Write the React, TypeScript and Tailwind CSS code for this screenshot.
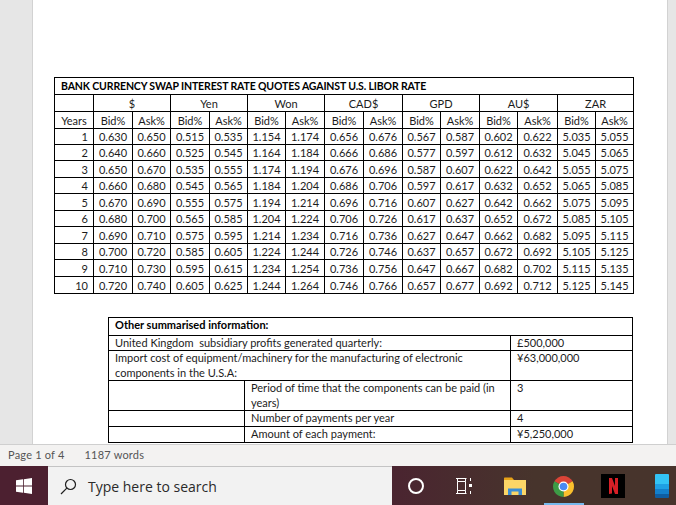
const currencies = ["$", "Yen", "Won", "CAD$", "GPD", "AU$", "ZAR"];

// each currency: [bid at year 1, spread is always 0.020, step is 0.010 a year]
const starts = [0.63, 0.515, 1.154, 0.656, 0.567, 0.602, 5.035];
const years = [1, 2, 3, 4, 5, 6, 7, 8, 9, 10];
const tallRows = [3, 5, 7, 9, 10];

const colWidths = [
  "w-[39px]",
  "w-[39px]",
  "w-[38px]",
  "w-[39px]",
  "w-[38px]",
  "w-[38px]",
  "w-[39px]",
  "w-[39px]",
  "w-[39px]",
  "w-[38px]",
  "w-[39px]",
  "w-[38px]",
  "w-[40px]",
  "w-[38px]",
  "w-[38px]",
];

const QuotesTable = () => {
  return (
    <table className="w-[579px] table-fixed border-collapse text-[11px] text-[#1c1c1c]">
      <colgroup>
        {colWidths.map((w, i) => (
          <col key={i} className={w} />
        ))}
      </colgroup>
      <tbody>
        <tr>
          <td colSpan={15} className="border border-black h-[17px] pl-[6px] text-[10.5px] font-bold text-black leading-[15px] tracking-[-0.13px]">
            BANK CURRENCY SWAP INTEREST RATE QUOTES AGAINST U.S. LIBOR RATE
          </td>
        </tr>
        <tr>
          <td className="border border-black h-[17px]"></td>
          {currencies.map((c) => (
            <td key={c} colSpan={2} className="border border-black h-[17px] text-center leading-[15px]">
              {c}
            </td>
          ))}
        </tr>
        <tr>
          <td className="border border-black h-[17px] text-center leading-[15px]">Years</td>
          {currencies.map((c) => [
            <td key={c + "b"} className="border border-black h-[17px] text-center leading-[15px]">Bid%</td>,
            <td key={c + "a"} className="border border-black h-[17px] text-center leading-[15px]">Ask%</td>,
          ])}
        </tr>
        {years.map((y) => {
          const cell = "border border-black p-0 leading-[15px] " + (tallRows.includes(y) ? "h-[17px]" : "h-[16px]");
          return (
            <tr key={y}>
              <td className={cell + " text-right pr-[5px]"}>{y}</td>
              {starts.map((s, i) => {
                const bid = s + (y - 1) * 0.01;
                return [
                  <td key={i + "b"} className={cell + " text-center"}>{bid.toFixed(3)}</td>,
                  <td key={i + "a"} className={cell + " text-center"}>{(bid + 0.02).toFixed(3)}</td>,
                ];
              })}
            </tr>
          );
        })}
      </tbody>
    </table>
  );
};

const info = "border border-black align-top pl-[6px] py-0 leading-[14px]";
const infoShort = "border border-black align-top pl-[6px] py-0 leading-[13px]";
const infoTall = "border border-black align-top pl-[6px] py-0 leading-[14.5px]";

const InfoTable = () => {
  return (
    <table className="mt-[23px] ml-[54px] w-[524px] table-fixed border-collapse text-[11px] text-[#1c1c1c]">
      <colgroup>
        <col className="w-[136px]" />
        <col className="w-[266px]" />
        <col className="w-[122px]" />
      </colgroup>
      <tbody>
        <tr>
          <td colSpan={3} className={info + " h-[18px] font-bold text-black"}>Other summarised information:</td>
        </tr>
        <tr>
          <td colSpan={2} className={infoShort + " h-[15px]"}>United Kingdom&nbsp; subsidiary profits generated quarterly:</td>
          <td className={infoShort}>£500,000</td>
        </tr>
        <tr>
          <td colSpan={2} className={infoTall + " h-[29px]"}>
            Import cost of equipment/machinery for the manufacturing of electronic
            <br />
            components in the U.S.A:
          </td>
          <td className={infoTall}>¥63,000,000</td>
        </tr>
        <tr>
          <td className={info}></td>
          <td className={infoTall + " h-[30px]"}>
            Period of time that the components can be paid (in
            <br />
            years)
          </td>
          <td className={infoTall}>3</td>
        </tr>
        <tr>
          <td className={info}></td>
          <td className={info + " h-[16px]"}>Number of payments per year</td>
          <td className={info}>4</td>
        </tr>
        <tr>
          <td className={info}></td>
          <td className={info + " h-[16px]"}>Amount of each payment:</td>
          <td className={info}>¥5,250,000</td>
        </tr>
      </tbody>
    </table>
  );
};

const WindowsLogo = () => (
  <svg width="16" height="16" viewBox="0 0 16 16" fill="#fff">
    <path d="M0 2.3 7 1.3V7.6H0ZM7.8 1.2 16 0V7.6H7.8ZM0 8.4H7V14.7L0 13.7ZM7.8 8.4H16V16L7.8 14.8Z" />
  </svg>
);

const SearchGlass = () => (
  <svg width="17" height="17" viewBox="0 0 17 17" fill="none" stroke="#1f1f1f" strokeWidth="1.2">
    <circle cx="10.5" cy="6.5" r="5" />
    <path d="M6.8 10.2 1 16" />
  </svg>
);

const TaskView = () => (
  <svg width="16" height="16" viewBox="0 0 16 16" fill="none" stroke="#fff" strokeWidth="1">
    <path d="M0 .5H10.5M0 15.5H10.5M1.5 3.5H9.5V12.5H1.5ZM1.5 3.5V.5M9.5 3.5V.5M1.5 12.5V15.5M9.5 12.5V15.5M14.5 0V3M14.5 13V16" />
    <rect x="13" y="6" width="3" height="3" fill="#fff" stroke="none" />
  </svg>
);

const Folder = () => (
  <svg width="22" height="18" viewBox="0 0 22 18">
    <path d="M0 1.5C0 .9.4.5 1 .5H8L10 3H0Z" fill="#e8a318" />
    <rect x="0" y="3" width="22" height="15" fill="#fbd667" />
    <path d="M4 18V11.5H18V18H14.5V14.5H7.5V18Z" fill="#3a8ed6" />
  </svg>
);

const Chrome = () => (
  <svg width="23" height="23" viewBox="0 0 48 48">
    <path d="M24 24 5 13A22 22 0 0 1 43 13Z" fill="#db4437" />
    <path d="M24 24 43 13A22 22 0 0 1 24 46Z" fill="#fbc02d" />
    <path d="M24 24 24 46A22 22 0 0 1 5 13Z" fill="#3d9b46" />
    <circle cx="24" cy="24" r="10.5" fill="#fff" />
    <circle cx="24" cy="24" r="8" fill="#4a8af4" />
  </svg>
);

const Netflix = () => (
  <div className="flex h-[24px] w-[24px] items-center justify-center bg-black">
    <svg width="9" height="16" viewBox="0 0 9 16" fill="#d81f26">
      <path d="M0 0H3L9 16H6ZM0 0H3V15.4L0 16ZM6 0H9V16L6 15.4Z" />
    </svg>
  </div>
);

const PhoneApp = () => (
  <div className="flex h-[24px] w-[14px] flex-col overflow-hidden rounded-[1px]">
    <div className="h-[10px] bg-[#33c3f5]"></div>
    <div className="h-[5px] bg-[#1fa0e4]"></div>
    <div className="h-[5px] bg-[#1480cc]"></div>
    <div className="h-[4px] bg-[#0f5ea3]"></div>
  </div>
);

export default function App() {
  return (
    <div className="flex h-[505px] w-[676px] flex-col overflow-hidden bg-[#e6e6e6] font-['Lato','Liberation_Sans',sans-serif]">
      <div className="h-[444px] pl-[32px] pr-[8px]">
        <div className="h-full overflow-hidden border-x border-[#d2d2d2] bg-white pl-[21px] pt-[77px]">
          <QuotesTable />
          <InfoTable />
        </div>
      </div>

      <div className="flex h-[22px] items-center border-t border-[#cfcfcf] bg-[#f3f2f1] pl-[8px] text-[11px] tracking-[0.2px] text-[#555]">
        <span>Page 1 of 4</span>
        <span className="ml-[20px]">1187 words</span>
      </div>

      <div className="flex h-[39px] bg-[#47342c]">
        <div className="flex w-[48px] items-center justify-center bg-[#4c2030]">
          <WindowsLogo />
        </div>
        <div className="flex w-[344px] items-center border-t border-[#c4c4c4] bg-[#f2f2f2] pl-[12px]">
          <SearchGlass />
          <span className="ml-[11px] font-['Open_Sans',sans-serif] text-[14px] text-[#2a2a2a]">Type here to search</span>
        </div>
        <div className="relative flex flex-1 items-center bg-gradient-to-r from-[#4a2430] via-[#47342c] to-[#47342c] pt-[1px]">
          <div className="ml-[16px] h-[16px] w-[16px] rounded-full border-[2px] border-white"></div>
          <div className="ml-[32px]"><TaskView /></div>
          <div className="ml-[32px]"><Folder /></div>
          <div className="ml-[26px]"><Chrome /></div>
          <div className="ml-[26px]"><Netflix /></div>
          <div className="ml-[30px]"><PhoneApp /></div>
          <div className="absolute bottom-0 left-[152px] h-[2px] w-[40px] bg-[#76b9ed]"></div>
        </div>
      </div>
    </div>
  );
}
